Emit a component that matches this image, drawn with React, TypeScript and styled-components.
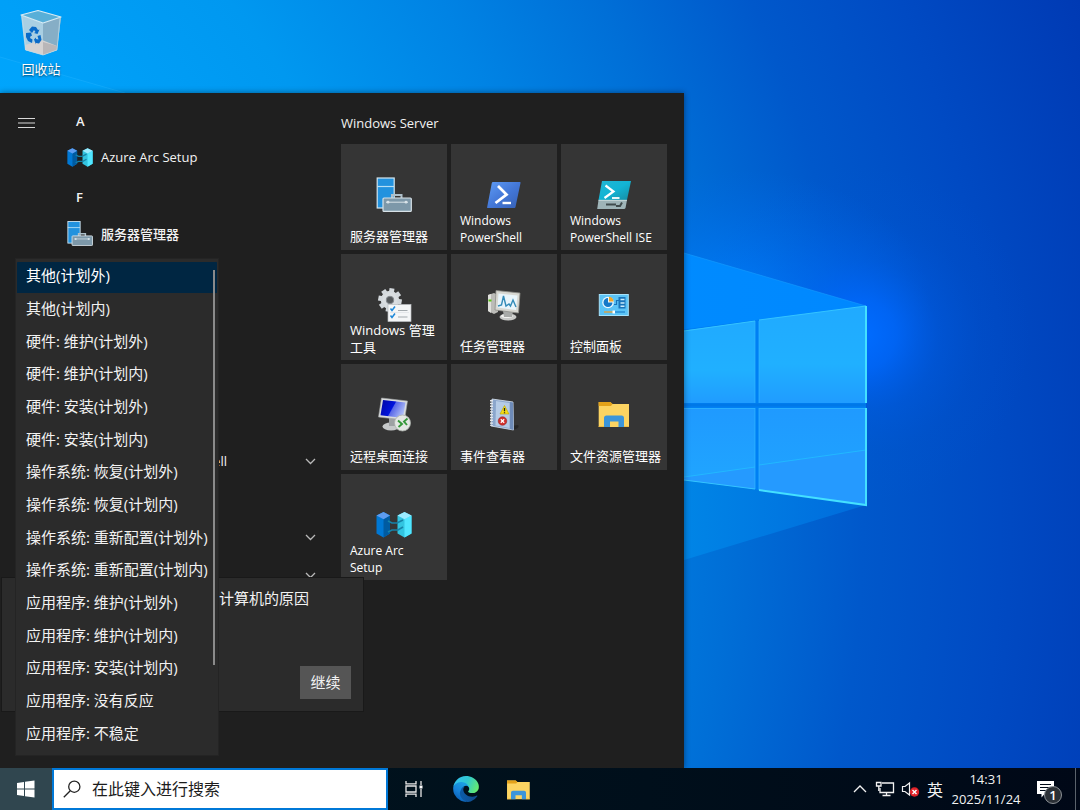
import React from "react";
import styled, { createGlobalStyle } from "styled-components";

const GlobalStyle = createGlobalStyle`
  * { box-sizing: border-box; }
  body {
    margin: 0;
    background: #0050c8;
    color: #f2f2f2;
    font-family: "Open Sans", "Noto Sans CJK SC", sans-serif;
    font-size: 13px;
  }
  button, input, select { font: inherit; color: inherit; }
`;

const Desktop = styled.main`
  position: relative;
  display: flex;
  flex-direction: column;
  align-items: flex-start;
  min-height: 100vh;
  overflow: hidden;
`;

const WallpaperArt = styled.svg`
  position: absolute;
  inset: 0;
  width: 100%;
  height: 100%;
`;

const Shortcuts = styled.section`
  position: relative;
  height: 93px;
  padding: 8px 7px 0;
`;

const Shortcut = styled.button`
  display: flex;
  flex-direction: column;
  align-items: center;
  gap: 5px;
  width: 68px;
  padding: 0;
  border: 0;
  background: none;
  color: #fff;
  line-height: 17px;
  text-shadow: 0 1px 2px rgba(0, 0, 0, 0.6);
`;

const StartMenu = styled.section`
  position: relative;
  flex: 1;
  display: grid;
  grid-template-columns: 52px 289px auto;
  padding-right: 17px;
  background: #1f1f1f;
  box-shadow: 0 0 6px rgba(0, 0, 0, 0.45);
`;

const Rail = styled.nav`
  padding: 20px 0 0 16px;
`;

const IconButton = styled.button`
  display: flex;
  padding: 0;
  border: 0;
  background: none;
`;

const AppList = styled.div`
  display: grid;
  grid-template-rows: repeat(13, 38px);
  align-content: start;
  padding: 7px 24px 0 15px;
`;

const Letter = styled.h2<{ $row: number }>`
  grid-row: ${(p) => p.$row};
  margin: 0;
  padding: 4px 9px 0;
  font-size: 13px;
  font-weight: 600;
  line-height: 34px;
`;

const AppEntry = styled.button<{ $row: number }>`
  grid-row: ${(p) => p.$row};
  display: flex;
  align-items: center;
  gap: 8px;
  padding: 0;
  border: 0;
  background: none;
  font-weight: 500;
  text-align: left;
  white-space: nowrap;
`;

const FolderEntry = styled(AppEntry)`
  justify-content: space-between;
  padding: 0 0 0 34px;
`;

const Tiles = styled.div`
  padding-top: 20px;
`;

const GroupTitle = styled.h2`
  margin: 0 0 11px;
  font-size: 13px;
  font-weight: 500;
  line-height: 20px;
`;

const TileGrid = styled.div`
  display: grid;
  grid-template-columns: repeat(3, 106px);
  grid-auto-rows: 106px;
  gap: 4px;
`;

const Tile = styled.button`
  display: flex;
  flex-direction: column;
  padding: 32px 0 5px;
  border: 0;
  background: #353535;
  color: #fff;
  text-align: left;

  svg { align-self: center; flex: none; }
`;

const TileLabel = styled.span`
  margin-top: auto;
  padding: 0 5px 0 9px;
  line-height: 17px;

  &:lang(en) {
    padding-right: 12px;
    font-size: 12px;
  }
`;

const ReasonDialog = styled.form`
  position: absolute;
  left: 1px;
  bottom: 56px;
  display: flex;
  flex-direction: column;
  justify-content: space-between;
  align-items: flex-end;
  width: 363px;
  height: 135px;
  padding: 9px 12px 12px;
  border: 1px solid #191919;
  background: #2b2b2b;
  font-size: 15px;
`;

const ReasonPrompt = styled.label`
  padding-right: 42px;
  line-height: 22px;
`;

const ContinueButton = styled.button`
  width: 51px;
  height: 33px;
  padding: 0 0 2px;
  border: 0;
  background: #555;
`;

const ReasonPopup = styled.div`
  position: absolute;
  left: 15px;
  bottom: 12px;
  width: 204px;
  height: 498px;
  padding: 2px 1px;
  border: 1px solid #242424;
  background: #2b2b2b;
`;

const ReasonList = styled.select`
  display: block;
  width: 100%;
  height: 492px;
  padding: 0;
  border: 0;
  outline: 0;
  overflow: hidden;
  background: transparent;
  font-size: 15px;

  option {
    height: 33px;
    padding: 3px 9px;
    color: #f2f2f2;
    line-height: 24px;
  }
  option:nth-child(3n) { height: 32px; }
  option:checked {
    background: linear-gradient(#002642, #002642) no-repeat 0 1px / 100% 31px #2b2b2b;
    color: #fff;
    -webkit-text-fill-color: #fff;
  }
`;

const ScrollThumb = styled.span`
  position: absolute;
  top: 11px;
  right: 3px;
  width: 2px;
  height: 395px;
  background: #8a8a8a;
`;

const Taskbar = styled.footer`
  position: relative;
  display: flex;
  align-self: stretch;
  height: 42px;
  background: linear-gradient(90deg, #00151f, #000f1b 60%, #000817);
`;

const TaskButton = styled.button<{ $active?: boolean }>`
  display: flex;
  align-items: center;
  justify-content: center;
  width: 52px;
  padding: 0;
  border: 0;
  background: ${(p) => (p.$active ? "#30464f" : "none")};
`;

const SearchBox = styled.label`
  display: flex;
  align-items: center;
  gap: 11px;
  width: 336px;
  padding: 0 9px;
  border: 2px solid #0078d7;
  background: #fff;
  color: #1c1c1c;
`;

const SearchInput = styled.input`
  flex: 1;
  min-width: 0;
  padding: 0;
  border: 0;
  outline: 0;
  background: none;
  font-size: 16px;

  &::placeholder { color: #1c1c1c; opacity: 1; }
`;

const Tray = styled.div`
  display: flex;
  align-items: center;
  margin-left: auto;
`;

const TrayButton = styled.button<{ $width: number }>`
  display: flex;
  align-items: center;
  justify-content: center;
  width: ${(p) => p.$width}px;
  height: 42px;
  padding: 0;
  border: 0;
  background: none;
  font-size: 16px;
`;

const Clock = styled.button`
  width: 78px;
  padding: 0;
  border: 0;
  background: none;
  line-height: 20px;
  text-align: center;

  time { display: block; }
`;

const Notifications = styled(TrayButton)`
  position: relative;
  justify-content: flex-start;
  padding-left: 8px;
`;

const Badge = styled.span`
  position: absolute;
  left: 19px;
  top: 18px;
  width: 18px;
  height: 18px;
  border: 1px solid #8d9297;
  border-radius: 50%;
  background: #2b3036;
  color: #fff;
  font-size: 13px;
  font-weight: 600;
  line-height: 16px;
  text-align: center;
`;

const ShowDesktop = styled.button`
  width: 5px;
  height: 42px;
  padding: 0;
  border: 0;
  border-left: 1px solid #5a626b;
  background: none;
`;

function Wallpaper() {
  return (
    <WallpaperArt viewBox="0 0 1080 810" preserveAspectRatio="xMidYMid slice" aria-hidden="true">
      <defs>
        <radialGradient id="sky" gradientUnits="userSpaceOnUse" cx="-400" cy="520" r="1600">
          <stop offset="0.25" stopColor="#00aaff" />
          <stop offset="0.41" stopColor="#00a0f8" />
          <stop offset="0.51" stopColor="#0098f0" />
          <stop offset="0.617" stopColor="#0083e4" />
          <stop offset="0.704" stopColor="#006fd7" />
          <stop offset="0.789" stopColor="#0058cb" />
          <stop offset="0.875" stopColor="#004ac3" />
          <stop offset="0.98" stopColor="#003ab4" />
        </radialGradient>
        <radialGradient id="halo" gradientUnits="userSpaceOnUse" cx="0" cy="0" r="1" gradientTransform="translate(862 335) scale(170 170)">
          <stop offset="0" stopColor="#006cff" />
          <stop offset="0.2" stopColor="#0068ff" stopOpacity="0.75" />
          <stop offset="0.45" stopColor="#005ff0" stopOpacity="0.3" />
          <stop offset="0.7" stopColor="#0058e0" stopOpacity="0.1" />
          <stop offset="1" stopColor="#0058e0" stopOpacity="0" />
        </radialGradient>
        <radialGradient id="rim" gradientUnits="userSpaceOnUse" cx="0" cy="0" r="1" gradientTransform="translate(740 300) scale(190 130)">
          <stop offset="0" stopColor="#0080ff" stopOpacity="0.9" />
          <stop offset="1" stopColor="#0068e8" stopOpacity="0" />
        </radialGradient>
        <linearGradient id="beamTop" x1="0" x2="1">
          <stop offset="0" stopColor="#008cff" />
          <stop offset="1" stopColor="#0088ff" />
        </linearGradient>
        <linearGradient id="beamLow" x1="0" x2="1">
          <stop offset="0" stopColor="#0090ea" />
          <stop offset="1" stopColor="#0070e0" stopOpacity="0.8" />
        </linearGradient>
        <linearGradient id="paneTop" x1="0" y1="0" x2="0" y2="1">
          <stop offset="0" stopColor="#20aaff" />
          <stop offset="0.6" stopColor="#20b0ff" />
          <stop offset="1" stopColor="#209cff" />
        </linearGradient>
        <linearGradient id="paneLow" x1="0" y1="0" x2="0" y2="1">
          <stop offset="0" stopColor="#1f9aff" />
          <stop offset="1" stopColor="#20a6ff" />
        </linearGradient>
      </defs>
      <rect width="1080" height="810" fill="url(#sky)" />
      <path d="M0 57 L125 93 H0Z" fill="#00aaff" opacity="0.35" />
      <path d="M0 57 L125 93" stroke="#25b5ff" opacity="0.4" />
      <rect x="520" y="160" width="420" height="280" fill="url(#rim)" />
      <circle cx="862" cy="335" r="170" fill="url(#halo)" />
      <path d="M600 228 L684 253 L866 306 V400 H600Z" fill="url(#beamTop)" />
      <path d="M684 253 L866 306" stroke="#18a0ff" opacity="0.55" />
      <path d="M600 400 H866 V505 L684 560 L600 585Z" fill="url(#beamLow)" />
      <path d="M600 340 L866 306 V505 L600 468Z" fill="#0080f4" />
      <path d="M600 342 L755 321 V403 H600Z" fill="url(#paneTop)" />
      <path d="M759 320 L866 306 V403 H759Z" fill="url(#paneTop)" />
      <path d="M600 408 H755 V489 L600 469Z" fill="url(#paneLow)" />
      <path d="M759 408 H866 V505 L759 490Z" fill="url(#paneLow)" />
      <path d="M684 477 L755 467 V489 L684 480Z M759 465 L866 450 V504 L759 490Z" fill="#259aff" />
      <path d="M684 477 L755 467 M759 465 L866 450" stroke="#22b8ff" />
      <path d="M684 405 H866" stroke="#0078e8" strokeWidth="3" />
      <path d="M755 321 V403 M755 408 V489 M759 321 V403 M759 408 V490 M684 408.500 H755 M759 408.500 H866" stroke="#30b8ff" strokeWidth="0.700" fill="none" />
      <path d="M759 320 L866 306 M684 331 L755 321 M684 480 L755 489" stroke="#34c4ff" strokeWidth="1" />
      <path d="M866 306 V403 M866 408 V505 L759 490" stroke="#44e0ff" strokeWidth="2" fill="none" />
    </WallpaperArt>
  );
}

function RecycleBin() {
  return (
    <svg width="42" height="48" viewBox="0 0 42 48" aria-hidden="true">
      <path d="M1 7 L5 42 L23 47 L37 42 L41 9 L23 15Z" fill="#a9cfe3" />
      <path d="M23 15 L41 9 L37 42 L23 47Z" fill="#86aec6" />
      <path d="M5 37 L22 32 L37 38 L37 42 L23 47 L5 42Z" fill="#d5d2d2" />
      <path d="M23 34 L37 38 L37 42 L23 47Z" fill="#b9b6b8" />
      <path d="M1 7 L18 2.500 L41 9 L23 15Z" fill="#58afd8" stroke="#d8ebf4" strokeWidth="1.200" strokeLinejoin="round" />
      <path d="M2 8 L6 42 L23 47 L37 42 L40 10" stroke="#c0dce8" strokeWidth="0.700" fill="none" />
      <g fill="#0a6bc8">
        <path d="M9 22 L12 18.500 L16 19 L18 22 L19.500 21.500 L17.500 26 L14 25 L15.500 24 L14 22 L12 25Z" />
        <path d="M6 25 L11 24.500 L12 28 L10.800 27.700 L10 30 L12.500 31.500 L12 35 L8 33 L6 29Z" />
        <path d="M14 31.500 L16 29.500 V31 L18.500 31.500 L17.500 28 L20.500 27 L21.500 32 L19 35.500 L16 35 V36.500Z" />
      </g>
    </svg>
  );
}

function ServerIcon({ size = 36 }: { size?: number }) {
  return (
    <svg width={size} height={size} viewBox="0 0 36 36" aria-hidden="true">
      <rect x="1.200" y="2" width="17" height="30" fill="#2292de" stroke="#d5e6ef" strokeWidth="1.200" />
      <path d="M1 10.500 H18" stroke="#b5dff5" strokeWidth="1.200" />
      <path d="M16 22 V19 H25.500 V22" fill="none" stroke="#aebfc9" strokeWidth="2" />
      <rect x="7" y="22" width="28.300" height="13.400" rx="1" fill="#7d98a9" stroke="#d8e2e8" strokeWidth="1.200" />
      <path d="M10 26.200 H32" stroke="#d8e2e8" strokeWidth="1" />
      <circle cx="12" cy="26.200" r="1.400" fill="#d8e2e8" />
      <circle cx="30" cy="26.200" r="1.400" fill="#d8e2e8" />
    </svg>
  );
}

function PowerShellIcon() {
  return (
    <svg width="36" height="36" viewBox="0 0 36 36" aria-hidden="true">
      <defs>
        <linearGradient id="ps" x1="0" x2="1" y2="1">
          <stop offset="0" stopColor="#5f9cf5" />
          <stop offset="0.5" stopColor="#4478d8" />
          <stop offset="1" stopColor="#3560b5" />
        </linearGradient>
      </defs>
      <path d="M6.500 6 H34 Q34.700 6 34.500 7 L29.500 31 Q29.300 32 28.500 32 H1.500 Q1 32 1.200 31 L5.800 7Z" fill="url(#ps)" />
      <path d="M12 10 L20.500 18.500 L9.500 27" fill="none" stroke="#fff" strokeWidth="2.800" />
      <path d="M16.500 27 H25" stroke="#fff" strokeWidth="2.400" />
    </svg>
  );
}

function PowerShellIseIcon() {
  return (
    <svg width="36" height="36" viewBox="0 0 36 36" aria-hidden="true">
      <defs>
        <linearGradient id="ise" x1="0" x2="1" y2="1">
          <stop offset="0" stopColor="#22b5d3" />
          <stop offset="0.5" stopColor="#12b4d4" />
          <stop offset="1" stopColor="#168ba2" />
        </linearGradient>
      </defs>
      <path d="M6 5 H35 L31 24 H2.500Z" fill="url(#ise)" />
      <path d="M2.500 24 H31 L29.500 32 Q29 33 28 33 H1.200Z" fill="#9eb4b8" />
      <path d="M2.500 24.300 H31" stroke="#d4e2e4" strokeWidth="0.800" />
      <path d="M9.500 9.500 L17.500 15.500 L8.500 22" fill="none" stroke="#fff" strokeWidth="2.200" />
      <path d="M16 22 H23.500" stroke="#fff" strokeWidth="1.800" />
      <path d="M10 28.500 H20 M20 30 H24 L26 26.500" stroke="#3f4b4d" strokeWidth="2" fill="none" />
    </svg>
  );
}

function AdminToolsIcon() {
  return (
    <svg width="36" height="36" viewBox="0 0 36 36" aria-hidden="true">
      <g transform="translate(14 14)">
        <circle r="6.500" fill="none" stroke="#d9dde0" strokeWidth="5.500" />
        {[10, 55, 100, 145, 190, 235, 280, 325].map((a) => (
          <rect key={a} x="-2.500" y="-11.800" width="5" height="4.500" fill="#d3d8dc" transform={`rotate(${a})`} />
        ))}
        <circle r="3.800" fill="#55595c" stroke="#99a0a5" strokeWidth="0.800" />
      </g>
      <rect x="12" y="18.500" width="23" height="17" fill="#f4f6f7" stroke="#b9bec1" strokeWidth="0.700" />
      <path d="M14.500 22.500 L16 24.500 L19 20.500 M14.500 29.500 L16 31.500 L19 27.500" fill="none" stroke="#1e88d8" strokeWidth="1.500" />
      <path d="M22 24.500 H31.500 M22 31 H31.500" stroke="#a3aaae" strokeWidth="1" />
      <path d="M14 26.500 H33" stroke="#d9dde0" strokeWidth="0.600" />
    </svg>
  );
}

function TaskManagerIcon() {
  return (
    <svg width="36" height="36" viewBox="0 0 36 36" aria-hidden="true">
      <path d="M2 9 L8 7 L12 9 V26 L8 28 L2 25Z" fill="#bcbcb8" />
      <path d="M2 9 L5 8 V27 L2 25Z" fill="#e0e0dc" />
      <rect x="2.500" y="13.500" width="3" height="2" fill="#5cc414" />
      <ellipse cx="22" cy="31" rx="8.500" ry="3.500" fill="#c9cac8" />
      <ellipse cx="21" cy="30" rx="6" ry="2" fill="#f1f1ef" />
      <path d="M17 25 H27 L26 31 H18Z" fill="#a8aaa8" />
      <path d="M10 4.500 L34 7 L32.500 27 L9 24Z" fill="#d8d8d2" stroke="#8d8d88" strokeWidth="0.800" />
      <path d="M12.500 7.500 L31.500 9.500 L30 24 L11.500 21.500Z" fill="#e9f5fb" />
      <path d="M12 20 L15.500 19 L17.500 10 L20 20 L23 18 L24.500 20 L27 14 L30 21" fill="none" stroke="#338bb8" strokeWidth="1.400" />
    </svg>
  );
}

function ControlPanelIcon() {
  return (
    <svg width="36" height="36" viewBox="0 0 36 36" aria-hidden="true">
      <rect x="3.300" y="8.500" width="29" height="21" fill="#5bc3f5" stroke="#a5e2fb" strokeWidth="1" />
      <circle cx="12" cy="16.500" r="5.800" fill="#eaf7fd" />
      <path d="M12 16.500 V12 A4.500 4.500 0 1 0 16.500 16.500Z" fill="#1578c8" />
      <path d="M13 15.500 V10.700 A5 5 0 0 1 17.500 15.500Z" fill="#f5a623" />
      <path d="M18 18.500 H20.500 V14.500 H23" fill="none" stroke="#1874ba" strokeWidth="1.200" />
      <rect x="22.500" y="11" width="7" height="11.500" fill="#1874ba" />
      <path d="M24.500 13.500 H28.500 M24.500 17 H28.500 M24.500 20.300 H28.500" stroke="#c9ecfc" strokeWidth="1.400" />
      <path d="M8 26 H17" stroke="#f09a24" strokeWidth="1.200" />
      <path d="M17 26 H29" stroke="#1b7fc9" strokeWidth="1.200" />
      <rect x="16.500" y="24.500" width="2.500" height="3" fill="#fff" />
    </svg>
  );
}

function RemoteDesktopIcon() {
  return (
    <svg width="36" height="36" viewBox="0 0 36 36" aria-hidden="true">
      <defs>
        <linearGradient id="rdp" x1="0" y1="0.200" x2="1" y2="0.600">
          <stop offset="0" stopColor="#0007a8" />
          <stop offset="0.480" stopColor="#0014dd" />
          <stop offset="0.520" stopColor="#5968e8" />
          <stop offset="1" stopColor="#b5c4f8" />
        </linearGradient>
      </defs>
      <ellipse cx="15" cy="30.500" rx="8.500" ry="4" fill="#c5c8c9" />
      <path d="M13 22 H22 L21 30 H13Z" fill="#9da1a3" />
      <path d="M5.500 2 L31.500 5 L28.500 24 L2.500 21Z" fill="#dadddd" stroke="#9fa3a5" strokeWidth="0.600" />
      <path d="M7 4 L29.500 6.500 L27 22 L4.500 19.300Z" fill="url(#rdp)" />
      <circle cx="26.500" cy="27" r="8" fill="#e4e7e4" stroke="#aaafaa" strokeWidth="0.800" />
      <path d="M22 24.500 L26 28 L22.500 31 M31.500 22.500 L28 25.500 L31 29" fill="none" stroke="#35983a" strokeWidth="1.900" />
    </svg>
  );
}

function EventViewerIcon() {
  return (
    <svg width="36" height="36" viewBox="0 0 36 36" aria-hidden="true">
      <path d="M25 30 L32 29 Q34 31 30 33 L24 34Z" fill="#202020" opacity="0.700" />
      <path d="M6 3 L27 6 L27.500 34 L5 30Z" fill="#8ba6cc" stroke="#d9e4f2" strokeWidth="0.800" />
      <path d="M10 5 L23.500 7 V32 L9.500 29.500Z" fill="#b5cbe6" />
      <path d="M24 6 L27 6.500 L27.500 34 L24 33Z" fill="#6e8bb8" />
      <path d="M5.500 4 V30" stroke="#e2e5ea" strokeWidth="3" strokeDasharray="1.400 1.400" />
      <path d="M18.500 9.500 L23 18 H14Z" fill="#f7dd16" stroke="#bba400" strokeWidth="0.600" strokeLinejoin="round" />
      <path d="M18.500 12 V15.300 M18.500 16.200 V17.200" stroke="#222" strokeWidth="1.300" />
      <circle cx="16.500" cy="25" r="4.300" fill="#d0302c" stroke="#8f1b1b" strokeWidth="0.500" />
      <path d="M14.800 23.300 L18.200 26.700 M18.200 23.300 L14.800 26.700" stroke="#fff" strokeWidth="1.300" />
    </svg>
  );
}

function FolderIcon({ size = 36 }: { size?: number }) {
  return (
    <svg width={size} height={size} viewBox="0 0 36 36" aria-hidden="true">
      <path d="M2.700 6 H14 L16.500 8 H33 V31 H2.700Z" fill="#fcd462" />
      <path d="M2.700 6 H14.500 L16.500 8 L15 10 H2.700Z" fill="#e3a21a" />
      <path d="M8 31 V22 Q8 19.500 10.500 19.500 H25.500 Q28 19.500 28 22 V31 H22.500 V25.500 H14 V31Z" fill="#3c95da" />
      <path d="M2.700 30.500 H8 M28 30.500 H33" stroke="#f2bd42" />
    </svg>
  );
}

function AzureArcIcon({ size = 36 }: { size?: number }) {
  return (
    <svg width={size} height={size} viewBox="0 0 36 36" aria-hidden="true">
      <path d="M0.500 9.500 L7.500 6 L14 9.500 V27.500 L7.500 31.500 L0.500 27.500Z" fill="#0078d4" />
      <path d="M7.500 13 L14 9.500 V27.500 L7.500 31.500Z" fill="#005ba1" />
      <path d="M0.500 9.500 L7.500 6 L14 9.500 L7.500 13.200Z" fill="#5e9cf0" />
      <path d="M21.500 9.500 L28.500 6 L35.500 9.500 V27.500 L28.500 31.500 L21.500 27.500Z" fill="#32c4e0" />
      <path d="M28.500 13 L35.500 9.500 V27.500 L28.500 31.500Z" fill="#50e6ff" />
      <path d="M21.500 9.500 L28.500 6 L35.500 9.500 L28.500 13.200Z" fill="#9cebff" />
      <path d="M12 15 L16 17 H21 L27 14 M12 26 L16 24 H22 L27 21" fill="none" stroke="#1683a8" strokeWidth="1.700" />
    </svg>
  );
}

function Chevron({ up }: { up?: boolean }) {
  return (
    <svg width="14" height="10" viewBox="0 0 14 10" fill="none" stroke={up ? "#f2f2f2" : "#b9b9b9"} strokeWidth="1.300" aria-hidden="true">
      <path d={up ? "M1 8 L7 2 L13 8" : "M3 3 L7.500 7.500 L12 3"} />
    </svg>
  );
}

function EdgeIcon() {
  return (
    <svg width="26" height="26" viewBox="0 0 256 259" aria-hidden="true">
      <defs>
        <linearGradient id="edgeA" x1="0.200" x2="1" y1="0.500" y2="0.500">
          <stop offset="0" stopColor="#0c59a4" />
          <stop offset="1" stopColor="#114a8b" />
        </linearGradient>
        <linearGradient id="edgeB" x1="0.700" x2="0.300" y1="0.200" y2="1">
          <stop offset="0" stopColor="#1b9de2" />
          <stop offset="0.500" stopColor="#1680d8" />
          <stop offset="1" stopColor="#0a5cb0" />
        </linearGradient>
        <linearGradient id="edgeC" x1="0" x2="1" y1="0.300" y2="0.600">
          <stop offset="0" stopColor="#35c1f1" />
          <stop offset="0.500" stopColor="#2fc8d0" />
          <stop offset="1" stopColor="#66eb6e" />
        </linearGradient>
      </defs>
      <path fill="url(#edgeA)" d="M235.680 195.460a93.730 93.730 0 01-10.540 4.710 101.870 101.870 0 01-35.900 6.460c-47.320 0-88.540-32.550-88.540-74.320A31.480 31.480 0 01117.130 105c-42.800 1.800-53.800 46.400-53.800 72.530 0 73.880 68.090 81.370 82.760 81.370 7.910 0 19.840-2.300 27-4.560l1.310-.44a128.340 128.340 0 0066.600-52.800 4 4 0 00-5.320-5.640z" />
      <path fill="url(#edgeB)" d="M105.730 241.420A79.200 79.200 0 0183 220.080a80.720 80.720 0 0129.500-120c3.120-1.470 8.450-4.130 15.540-4a32.350 32.350 0 0125.690 13 31.880 31.880 0 016.360 18.660c0-.21 24.460-79.600-80-79.600-43.900 0-80 41.660-80 78.210a130.150 130.150 0 0012.110 56 128 128 0 00156.380 67.110 75.550 75.550 0 01-62.780-8z" />
      <path fill="url(#edgeC)" d="M152.330 148.860c-.81 1.050-3.300 2.500-3.300 5.660 0 2.610 1.700 5.120 4.720 7.230 14.380 10 41.490 8.680 41.560 8.680a59.560 59.560 0 0030.270-8.350A61.380 61.380 0 00256 109.190c.26-22.410-8-37.310-11.340-43.910C223.460 23.840 177.720 0 128 0A128 128 0 000 126.200c.48-36.540 36.800-66.050 80-66.050 3.500 0 23.460.34 42 10.070 16.340 8.580 24.900 18.940 30.850 29.210 6.180 10.670 7.280 24.150 7.280 29.520s-2.740 13.330-7.800 19.910z" />
    </svg>
  );
}

const tiles = [
  { label: "服务器管理器", lang: "zh", icon: <ServerIcon /> },
  { label: "Windows PowerShell", lang: "en", icon: <PowerShellIcon /> },
  { label: "Windows PowerShell ISE", lang: "en", icon: <PowerShellIseIcon /> },
  { label: "Windows 管理工具", lang: "zh", icon: <AdminToolsIcon /> },
  { label: "任务管理器", lang: "zh", icon: <TaskManagerIcon /> },
  { label: "控制面板", lang: "zh", icon: <ControlPanelIcon /> },
  { label: "远程桌面连接", lang: "zh", icon: <RemoteDesktopIcon /> },
  { label: "事件查看器", lang: "zh", icon: <EventViewerIcon /> },
  { label: "文件资源管理器", lang: "zh", icon: <FolderIcon /> },
  { label: "Azure Arc Setup", lang: "en", icon: <AzureArcIcon /> },
];

const reasons = [
  "其他(计划外)",
  "其他(计划内)",
  "硬件: 维护(计划外)",
  "硬件: 维护(计划内)",
  "硬件: 安装(计划外)",
  "硬件: 安装(计划内)",
  "操作系统: 恢复(计划外)",
  "操作系统: 恢复(计划内)",
  "操作系统: 重新配置(计划外)",
  "操作系统: 重新配置(计划内)",
  "应用程序: 维护(计划外)",
  "应用程序: 维护(计划内)",
  "应用程序: 安装(计划内)",
  "应用程序: 没有反应",
  "应用程序: 不稳定",
];

export default function App() {
  return (
    <>
      <GlobalStyle />
      <Desktop>
        <Wallpaper />
        <Shortcuts>
          <Shortcut type="button">
            <RecycleBin />
            回收站
          </Shortcut>
        </Shortcuts>

        <StartMenu>
          <Rail>
            <IconButton type="button" aria-label="开始">
              <svg width="20" height="20" viewBox="0 0 20 20" stroke="#d8d8d8" strokeWidth="1.200" aria-hidden="true">
                <path d="M2 5.500 H19 M2 10 H19 M2 14.500 H19" />
              </svg>
            </IconButton>
          </Rail>

          <AppList>
            <Letter $row={1}>A</Letter>
            <AppEntry $row={2} type="button">
              <AzureArcIcon size={26} />
              Azure Arc Setup
            </AppEntry>
            <Letter $row={3}>F</Letter>
            <AppEntry $row={4} type="button">
              <ServerIcon size={26} />
              服务器管理器
            </AppEntry>
            <FolderEntry $row={10} type="button">
              Windows PowerShell
              <Chevron />
            </FolderEntry>
            <FolderEntry $row={12} type="button" aria-label="展开">
              <span />
              <Chevron />
            </FolderEntry>
            <FolderEntry $row={13} type="button" aria-label="展开">
              <span />
              <Chevron />
            </FolderEntry>
          </AppList>

          <Tiles>
            <GroupTitle>Windows Server</GroupTitle>
            <TileGrid>
              {tiles.map((tile) => (
                <Tile key={tile.label} type="button">
                  {tile.icon}
                  <TileLabel lang={tile.lang}>{tile.label}</TileLabel>
                </Tile>
              ))}
            </TileGrid>
          </Tiles>

          <ReasonDialog>
            <ReasonPrompt htmlFor="reason">计算机的原因</ReasonPrompt>
            <ContinueButton type="button">继续</ContinueButton>
          </ReasonDialog>

          <ReasonPopup>
            <ReasonList id="reason" size={15} defaultValue={reasons[0]}>
              {reasons.map((reason) => (
                <option key={reason}>{reason}</option>
              ))}
            </ReasonList>
            <ScrollThumb />
          </ReasonPopup>
        </StartMenu>

        <Taskbar>
          <TaskButton $active type="button" aria-label="开始">
            <svg width="20" height="20" viewBox="0 0 20 20" fill="#fff" aria-hidden="true">
              <path d="M1 4 L8 3 V9.600 H1Z M9 2.800 L18.500 1.500 V9.600 H9Z M1 10.500 H8 V17 L1 16Z M9 10.500 H18.500 V18.500 L9 17.200Z" />
            </svg>
          </TaskButton>
          <SearchBox>
            <svg width="18" height="18" viewBox="0 0 18 18" fill="none" stroke="#222" strokeWidth="1.300" aria-hidden="true">
              <circle cx="11.300" cy="6.700" r="5.600" />
              <path d="M7.300 10.700 L0.800 17.200" />
            </svg>
            <SearchInput type="text" placeholder="在此键入进行搜索" aria-label="在此键入进行搜索" />
          </SearchBox>
          <TaskButton type="button" aria-label="任务视图">
            <svg width="20" height="18" viewBox="0 0 20 18" fill="none" stroke="#e8e8e8" strokeWidth="1.300" aria-hidden="true">
              <path d="M2 1 V3.800 H12 V1 M2 17 V14.200 H12 V17 M2 6 H12 V12 H2Z M17 1 V5 M17 9 V17" />
              <rect x="15.500" y="5.500" width="3" height="3" fill="#fff" stroke="none" />
            </svg>
          </TaskButton>
          <TaskButton type="button" aria-label="Microsoft Edge">
            <EdgeIcon />
          </TaskButton>
          <TaskButton type="button" aria-label="文件资源管理器">
            <FolderIcon size={27} />
          </TaskButton>

          <Tray>
            <TrayButton $width={26} type="button" aria-label="显示隐藏的图标">
              <Chevron up />
            </TrayButton>
            <TrayButton $width={24} type="button" aria-label="网络">
              <svg width="20" height="16" viewBox="0 0 20 16" fill="none" stroke="#f2f2f2" strokeWidth="1.300" aria-hidden="true">
                <path d="M7 2 H18.500 V11.500 H5 V7 M11.500 11.500 V14.500 M7.500 14.500 H15.500" />
                <path d="M1.500 1.500 H6 V5 H1.500Z M3.800 5 V10" />
              </svg>
            </TrayButton>
            <TrayButton $width={26} type="button" aria-label="音量">
              <svg width="19" height="16" viewBox="0 0 19 16" aria-hidden="true">
                <path d="M1.500 5.500 H4 L8.500 2 V14 L4 10.500 H1.500Z" fill="none" stroke="#f2f2f2" strokeWidth="1.200" />
                <circle cx="13.500" cy="11" r="4.700" fill="#e02228" />
                <path d="M11.500 9 L15.500 13 M15.500 9 L11.500 13" stroke="#fff" strokeWidth="1.400" />
              </svg>
            </TrayButton>
            <TrayButton $width={24} type="button">英</TrayButton>
            <Clock type="button">
              <time>14:31</time>
              <time>2025/11/24</time>
            </Clock>
            <Notifications $width={50} type="button" aria-label="通知">
              <svg width="26" height="20" viewBox="0 0 26 20" aria-hidden="true">
                <path d="M4 2 H21 V15 H11.500 L8.500 18.500 V15 H4Z" fill="#fff" />
                <path d="M7 5.500 H18 M7 8.500 H18 M7 11.500 H14" stroke="#000a18" strokeWidth="1.200" />
              </svg>
              <Badge>1</Badge>
            </Notifications>
            <ShowDesktop type="button" aria-label="显示桌面" />
          </Tray>
        </Taskbar>
      </Desktop>
    </>
  );
}
